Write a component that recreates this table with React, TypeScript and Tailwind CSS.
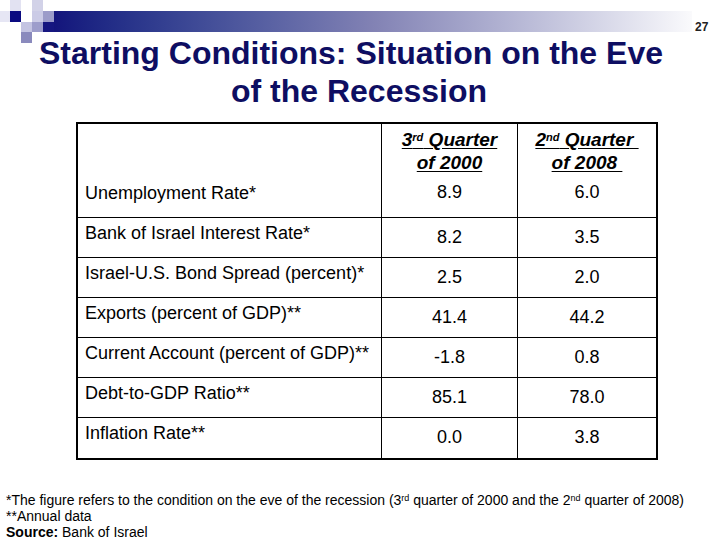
const ROWS: { label: string; a: string; b: string }[] = [
  { label: 'Bank of Israel Interest Rate*', a: '8.2', b: '3.5' },
  { label: 'Israel-U.S. Bond Spread (percent)*', a: '2.5', b: '2.0' },
  { label: 'Exports (percent of GDP)**', a: '41.4', b: '44.2' },
  { label: 'Current Account (percent of GDP)**', a: '-1.8', b: '0.8' },
  { label: 'Debt-to-GDP Ratio**', a: '85.1', b: '78.0' },
  { label: 'Inflation Rate**', a: '0.0', b: '3.8' },
];

function Squares() {
  return (
    <svg width="54" height="43" viewBox="0 0 54 43" className="shrink-0 overflow-visible">
      <rect x="10" y="0" width="11" height="11" fill="#e2e2f2" />
      <rect x="32" y="0" width="11" height="11" fill="#d2d2e8" />
      <rect x="0" y="11" width="10" height="11" fill="#e6e6f4" />
      <rect x="10" y="11" width="11" height="11" fill="#0a0a80" />
      <rect x="32" y="11" width="11" height="11" fill="#cbcbe6" />
      <rect x="43" y="11" width="11" height="11" fill="#9c9cc9" />
      <rect x="43" y="22" width="11" height="10" fill="#161680" />
      <rect x="21" y="22" width="11" height="10" fill="#c4c4e2" />
      <rect x="32" y="22" width="11" height="10" fill="#9d9dcb" />
      <rect x="21" y="32" width="11" height="11" fill="#8a8abd" />
    </svg>
  );
}

function Row({ label, a, b, last }: { label: string; a: string; b: string; last?: boolean }) {
  return (
    <div className={`grid grid-cols-[304px_136px_1fr] h-[40px] ${last ? '' : 'border-b border-black'}`}>
      <div className="border-r border-black pl-[7px] pt-[5px] text-[18px] leading-[21px]">{label}</div>
      <div className="border-r border-black pt-[9px] text-center text-[18px] leading-[21px]">{a}</div>
      <div className="pt-[9px] text-center text-[18px] leading-[21px]">{b}</div>
    </div>
  );
}

export default function App() {
  return (
    <div className="w-[720px] h-[540px] bg-white overflow-hidden text-black font-['Liberation_Sans',Arial,sans-serif]">
      {/* top band */}
      <div className="flex items-start h-[32px]">
        <Squares />
        <div className="flex-1 mt-[11px] h-[21px] bg-linear-to-r from-[#14147c] via-[#8282b4] to-[#fafafc]" />
        <div className="w-[28px] pt-[20px] pl-[3px] text-[12px] leading-[14px] font-bold text-[#222]">27</div>
      </div>

      {/* title */}
      <div className="mt-[2px] w-[702px] text-center font-bold text-[32px] leading-[38px] text-[#0e0e62]">
        <div>Starting Conditions: Situation on the Eve</div>
        <div className="pl-[16px]">of the Recession</div>
      </div>

      {/* table */}
      <div className="ml-[76px] mt-[12px] w-[582px] border-2 border-black">
        <div className="grid grid-cols-[304px_136px_1fr] h-[94px] border-b border-black">
          <div className="border-r border-black flex flex-col">
            <div className="h-[54px]" />
            <div className="pl-[7px] pt-[5px] text-[18px] leading-[21px]">Unemployment Rate*</div>
          </div>
          <div className="border-r border-black flex flex-col items-center">
            <div className="pt-[4px] text-[19px] leading-[23px] font-bold italic text-center">
              <div><span className="underline underline-offset-2">3<sup className="text-[11px]">rd</sup> Quarter</span></div>
              <div><span className="underline underline-offset-2">of 2000</span></div>
            </div>
            <div className="pt-[8px] text-[18px] leading-[21px]">8.9</div>
          </div>
          <div className="flex flex-col items-center">
            <div className="pt-[4px] text-[19px] leading-[23px] font-bold italic text-center">
              <div><span className="underline underline-offset-2 whitespace-pre">2<sup className="text-[11px]">nd</sup> Quarter </span></div>
              <div><span className="underline underline-offset-2 whitespace-pre">of 2008 </span></div>
            </div>
            <div className="pt-[8px] text-[18px] leading-[21px]">6.0</div>
          </div>
        </div>
        {ROWS.map((r, i) => (
          <Row key={r.label} label={r.label} a={r.a} b={r.b} last={i === ROWS.length - 1} />
        ))}
      </div>

      {/* notes */}
      <div className="mt-[32px] pl-[6px] text-[14px] leading-[16px]">
        <div>
          *The figure refers to the condition on the eve of the recession (3<sup className="text-[9px]">rd</sup> quarter of 2000 and the 2<sup className="text-[9px]">nd</sup> quarter of 2008)
        </div>
        <div>**Annual data</div>
        <div>
          <span className="font-bold">Source:</span> Bank of Israel
        </div>
      </div>
    </div>
  );
}
